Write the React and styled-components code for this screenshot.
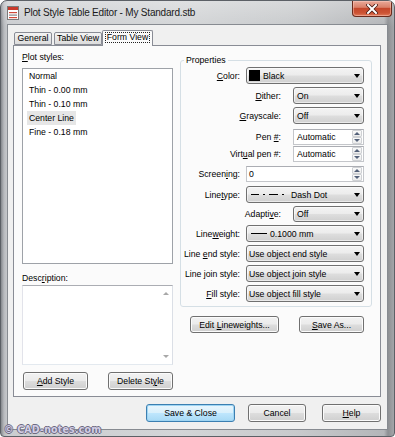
import React from "react";
import styled, { createGlobalStyle } from "styled-components";

const GlobalStyle = createGlobalStyle`
  *, *::before, *::after { box-sizing: border-box; }
  html, body { margin: 0; padding: 0; background: #fff; }
  body { font-family: "Liberation Sans", Arial, sans-serif; }
`;

const Window = styled.div`
  position: relative;
  width: 395px;
  height: 437px;
  border: 1px solid #5c6066;
  border-radius: 7px 7px 4px 4px;
  overflow: hidden;
  display: flex;
  flex-direction: column;
  background:
    linear-gradient(to bottom, rgba(255,255,255,0.28), rgba(255,255,255,0) 26px),
    linear-gradient(to right, #85888d 0px, #b8babe 3px, #cbcdd0 7px, #d3d5d7 45%, #c8cacc 75%, #b4b6b9 calc(100% - 10px), #8d8f93 calc(100% - 6px), #a4a6a9 100%);
  font-family: "Liberation Sans", Arial, sans-serif;
  font-size: 8.7px;
  color: #000;
`;

const TitleBar = styled.div`
  height: 23px;
  flex: none;
  display: flex;
  align-items: center;
  padding-left: 6px;
`;

const TitleText = styled.div`
  font-size: 10px;
  letter-spacing: -0.2px;
  color: #1a1a1a;
  margin-left: 5px;
  white-space: nowrap;
`;

const CloseButton = styled.div`
  margin-left: auto;
  margin-right: 2px;
  align-self: flex-start;
  width: 40px;
  height: 16px;
  border: 1px solid #6a2a1c;
  border-top: none;
  border-radius: 0 0 4px 4px;
  background: linear-gradient(#eaa999 0%, #d98069 42%, #c5472b 50%, #cc5334 80%, #e07a5a 100%);
  box-shadow: inset 0 0 0 1px rgba(255, 210, 200, 0.45);
  display: flex;
  align-items: center;
  justify-content: center;
`;

const Client = styled.div`
  flex: 1;
  margin: 0 6px 6px 6px;
  border: 1px solid #878b91;
  background: #f0f0f0;
  display: flex;
  flex-direction: column;
  padding: 5px 6px 0 5px;
`;

const TabStrip = styled.div`
  height: 15px;
  flex: none;
  display: flex;
  align-items: flex-end;
  padding-left: 1px;
`;

const Tab = styled.div`
  position: relative;
  z-index: ${(p) => (p.$active ? 2 : 1)};
  width: ${(p) => p.$w}px;
  margin-left: ${(p) => p.$ml || 0}px;
  height: ${(p) => (p.$active ? 16 : 13)}px;
  margin-bottom: ${(p) => (p.$active ? -1 : 0)}px;
  border: 1px solid #898c95;
  border-bottom: ${(p) => (p.$active ? "none" : "1px solid #898c95")};
  border-radius: 2px 2px 0 0;
  background: ${(p) =>
    p.$active ? "#fbfbfb" : "linear-gradient(#f4f4f4, #e6e6e6 50%, #dcdcdc)"};
  display: flex;
  align-items: ${(p) => (p.$active ? "flex-start" : "center")};
  justify-content: center;
  padding-top: ${(p) => (p.$active ? 1 : 0)}px;
  white-space: nowrap;
  line-height: 11px;
`;

const FocusRect = styled.span`
  border: 1px dotted #222;
  padding: 0 1px;
  line-height: 9px;
`;

const Panel = styled.div`
  height: 352px;
  flex: none;
  border: 1px solid #898c95;
  background: #fbfbfb;
  display: flex;
  gap: 7px;
  padding: 5px 8px 0 8px;
`;

const LeftCol = styled.div`
  width: 151px;
  flex: none;
  display: flex;
  flex-direction: column;
`;

const FieldLabel = styled.div`
  line-height: 12px;
  height: 12px;
  margin-top: ${(p) => p.$mt || 0}px;
  white-space: nowrap;
`;

const Key = styled.span`
  text-decoration: underline;
  text-underline-offset: 1px;
`;

const ListBox = styled.ul`
  list-style: none;
  margin: 5px 0 0 0;
  padding: 0;
  height: 196px;
  background: #fff;
  border: 1px solid #9ea2a8;
`;

const ListItem = styled.li`
  height: 14px;
  line-height: 14px;
  padding-left: 4px;
`;

const ItemText = styled.span`
  display: inline-block;
  padding: 0 2px;
  background: ${(p) => (p.$selected ? "#e6e6e6" : "transparent")};
`;

const TextArea = styled.div`
  margin-top: 1px;
  height: 80px;
  background: #fff;
  border: 1px solid #abadb3;
  border-color: #abadb3 #dbdfe6 #e3e9ef #e2e3ea;
  display: flex;
  justify-content: flex-end;
`;

const ScrollTrack = styled.div`
  width: 13px;
  display: flex;
  flex-direction: column;
  justify-content: space-between;
  align-items: center;
  padding: 6px 0 6px;
`;

const TinyArrow = styled.span`
  width: 0;
  height: 0;
  border-left: 3px solid transparent;
  border-right: 3px solid transparent;
  ${(p) =>
    p.$up
      ? `border-bottom: 3px solid ${p.$color || "#a8a8a8"};`
      : `border-top: 3px solid ${p.$color || "#a8a8a8"};`}
`;

const ButtonRow = styled.div`
  display: flex;
  justify-content: ${(p) => p.$justify || "space-between"};
  margin-top: ${(p) => p.$mt || 0}px;
  padding: ${(p) => p.$pad || "0"};
  flex: none;
`;

const Button = styled.div`
  width: ${(p) => p.$w}px;
  height: ${(p) => p.$h || 18}px;
  margin-left: ${(p) => p.$ml || 0}px;
  border: 1px solid ${(p) => (p.$default ? "#3c7fb1" : "#707070")};
  border-radius: 3px;
  background: ${(p) =>
    p.$default
      ? "linear-gradient(#eaf6fd 0%, #d9f0fc 48%, #bee6fd 52%, #a7d9f5 100%)"
      : "linear-gradient(#f2f2f2 0%, #ebebeb 48%, #dddddd 52%, #cfcfcf 100%)"};
  box-shadow: inset 0 0 0 1px ${(p) => (p.$default ? "#9fd5f3" : "#fbfbfb")};
  display: flex;
  align-items: center;
  justify-content: center;
  white-space: nowrap;
  color: #000;
`;

const Caption = styled.span`
  white-space: pre;
`;

const RightCol = styled.div`
  width: 192px;
  flex: none;
  display: flex;
  flex-direction: column;
  padding-top: 4px;
`;

const GroupBox = styled.fieldset`
  margin: 0;
  width: 192px;
  min-width: 0;
  border: 1px solid #d5dfe5;
  border-radius: 3px;
  padding: 0 7px 4px 0;
`;

const Legend = styled.legend`
  margin-left: 3px;
  padding: 0 2px;
  line-height: 11px;
  height: 11px;
`;

const Row = styled.div`
  display: flex;
  align-items: center;
  height: ${(p) => p.$h || 17}px;
  margin-top: ${(p) => (p.$mt === undefined ? 3 : p.$mt)}px;
`;

const RowLabel = styled.div`
  width: ${(p) => (p.$indent ? 100 : 59)}px;
  flex: none;
  text-align: right;
  white-space: nowrap;
`;

const Combo = styled.div`
  height: 100%;
  width: ${(p) => (p.$indent ? 71 : 118)}px;
  margin-left: ${(p) => (p.$indent ? 12 : 6)}px;
  border: 1px solid #707070;
  border-radius: 3px;
  background: linear-gradient(#f3f3f3 0%, #ececec 48%, #dedede 52%, #d0d0d0 100%);
  box-shadow: inset 0 0 0 1px rgba(255, 255, 255, 0.55);
  display: flex;
  align-items: center;
  padding: 0 3px 0 ${(p) => (p.$indent ? 3 : 2)}px;
  white-space: nowrap;
  overflow: hidden;
`;

const DropArrow = styled.span`
  margin-left: auto;
  flex: none;
  width: 0;
  height: 0;
  border-left: 3.5px solid transparent;
  border-right: 3.5px solid transparent;
  border-top: 4px solid #000;
`;

const Swatch = styled.span`
  width: 11px;
  height: 11px;
  background: #000;
  margin-right: 3px;
  flex: none;
`;

const SpinBox = styled.div`
  height: 100%;
  width: ${(p) => (p.$indent ? 71 : 118)}px;
  margin-left: ${(p) => (p.$indent ? 12 : 6)}px;
  background: #fff;
  border: 1px solid #c4c6ca;
  border-top-color: #abadb3;
  display: flex;
  align-items: center;
  padding-left: ${(p) => (p.$indent ? 3 : 2)}px;
  padding-right: 1px;
`;

const SpinButtons = styled.div`
  margin-left: auto;
  width: 10px;
  height: 14px;
  display: flex;
  flex-direction: column;
`;

const SpinHalf = styled.div`
  flex: 1;
  border: 1px solid #cfd1d4;
  border-radius: 1px;
  background: linear-gradient(#fafafa, #ececec);
  display: flex;
  align-items: center;
  justify-content: center;
`;

const LineSample = styled.svg`
  flex: none;
  margin-right: ${(p) => p.$mr || 4}px;
  margin-left: 1px;
`;

const Watermark = styled.div`
  position: absolute;
  left: 3px;
  bottom: 1px;
  font-family: "DejaVu Sans Condensed", "DejaVu Sans", sans-serif;
  font-weight: bold;
  font-size: 10.5px;
  letter-spacing: 0.2px;
  color: #d2cee6;
  text-shadow: 1px 0 0 #6d6a80, -1px 0 0 #6d6a80, 0 1px 0 #6d6a80, 0 -1px 0 #6d6a80;
  white-space: nowrap;
`;

const TitleIcon = () => (
  <svg width="12" height="14" viewBox="0 0 12 14">
    <rect x="0.5" y="0.5" width="11" height="13" fill="#fff" stroke="#7a7a7a" />
    <rect x="1" y="1" width="10" height="3" fill="#c9392a" />
    <rect x="2" y="6" width="8" height="1.2" fill="#d04a3a" />
    <rect x="2" y="8.5" width="8" height="1.2" fill="#888" />
    <rect x="2" y="11" width="8" height="1.2" fill="#d04a3a" />
  </svg>
);

const CloseGlyph = () => (
  <svg width="12" height="10" viewBox="0 0 12 10">
    <path d="M2 1 L10 9 M10 1 L2 9" stroke="#4a1a12" strokeWidth="3.6" strokeLinecap="square" />
    <path d="M2 1 L10 9 M10 1 L2 9" stroke="#fff" strokeWidth="2" strokeLinecap="square" />
  </svg>
);

const Spinner = () => (
  <SpinButtons>
    <SpinHalf>
      <TinyArrow $up $color="#55627a" />
    </SpinHalf>
    <SpinHalf>
      <TinyArrow $color="#55627a" />
    </SpinHalf>
  </SpinButtons>
);

const plotStyles = [
  "Normal",
  "Thin - 0.00 mm",
  "Thin - 0.10 mm",
  "Center Line",
  "Fine - 0.18 mm",
];

export default function App() {
  return (
    <>
      <GlobalStyle />
      <Window>
        <TitleBar>
          <TitleIcon />
          <TitleText>Plot Style Table Editor - My Standard.stb</TitleText>
          <CloseButton>
            <CloseGlyph />
          </CloseButton>
        </TitleBar>
        <Client>
          <TabStrip>
            <Tab $w={38}>General</Tab>
            <Tab $w={48} $ml={2}>Table View</Tab>
            <Tab $w={51} $ml={0} $active>
              <FocusRect>Form View</FocusRect>
            </Tab>
          </TabStrip>
          <Panel>
            <LeftCol>
              <FieldLabel>
                <Key>P</Key>lot styles:
              </FieldLabel>
              <ListBox>
                {plotStyles.map((s) => (
                  <ListItem key={s}>
                    <ItemText $selected={s === "Center Line"}>{s}</ItemText>
                  </ListItem>
                ))}
              </ListBox>
              <FieldLabel $mt={8}>
                Desc<Key>r</Key>iption:
              </FieldLabel>
              <TextArea>
                <ScrollTrack>
                  <TinyArrow $up />
                  <TinyArrow />
                </ScrollTrack>
              </TextArea>
              <ButtonRow $mt={7} $pad="0 0 0 1px">
                <Button $w={65}>
                  <Caption>
                    <Key>A</Key>dd Style
                  </Caption>
                </Button>
                <Button $w={65}>
                  <Caption>
                    Delete St<Key>y</Key>le
                  </Caption>
                </Button>
              </ButtonRow>
            </LeftCol>
            <RightCol>
              <GroupBox>
                <Legend>Properties</Legend>
                <Row $mt={1}>
                  <RowLabel>
                    <Key>C</Key>olor:
                  </RowLabel>
                  <Combo>
                    <Swatch />
                    Black
                    <DropArrow />
                  </Combo>
                </Row>
                <Row>
                  <RowLabel $indent>
                    <Key>D</Key>ither:
                  </RowLabel>
                  <Combo $indent>
                    On
                    <DropArrow />
                  </Combo>
                </Row>
                <Row>
                  <RowLabel $indent>
                    <Key>G</Key>rayscale:
                  </RowLabel>
                  <Combo $indent>
                    Off
                    <DropArrow />
                  </Combo>
                </Row>
                <Row $mt={5} $h={16}>
                  <RowLabel $indent>
                    Pen <Key>#</Key>:
                  </RowLabel>
                  <SpinBox $indent>
                    Automatic
                    <Spinner />
                  </SpinBox>
                </Row>
                <Row $mt={1} $h={16}>
                  <RowLabel $indent>
                    Virt<Key>u</Key>al pen #:
                  </RowLabel>
                  <SpinBox $indent>
                    Automatic
                    <Spinner />
                  </SpinBox>
                </Row>
                <Row $mt={4} $h={16}>
                  <RowLabel>
                    Screen<Key>i</Key>ng:
                  </RowLabel>
                  <SpinBox>
                    0
                    <Spinner />
                  </SpinBox>
                </Row>
                <Row $mt={4}>
                  <RowLabel>
                    Line<Key>t</Key>ype:
                  </RowLabel>
                  <Combo>
                    <LineSample width="36" height="3" viewBox="0 0 36 3" $mr={5}>
                      <path d="M1 1.5 H9 M13 1.5 H15 M19 1.5 H28 M32 1.5 H34" stroke="#000" strokeWidth="1" />
                    </LineSample>
                    Dash Dot
                    <DropArrow />
                  </Combo>
                </Row>
                <Row $h={16}>
                  <RowLabel $indent>
                    Adapti<Key>v</Key>e:
                  </RowLabel>
                  <Combo $indent>
                    Off
                    <DropArrow />
                  </Combo>
                </Row>
                <Row>
                  <RowLabel>
                    Line<Key>w</Key>eight:
                  </RowLabel>
                  <Combo>
                    <LineSample width="17" height="3" viewBox="0 0 17 3" $mr={3}>
                      <path d="M1 1.5 H17" stroke="#000" strokeWidth="1" />
                    </LineSample>
                    0.1000 mm
                    <DropArrow />
                  </Combo>
                </Row>
                <Row>
                  <RowLabel>
                    Line <Key>e</Key>nd style:
                  </RowLabel>
                  <Combo>
                    Use object end style
                    <DropArrow />
                  </Combo>
                </Row>
                <Row>
                  <RowLabel>
                    Line <Key>j</Key>oin style:
                  </RowLabel>
                  <Combo>
                    Use object join style
                    <DropArrow />
                  </Combo>
                </Row>
                <Row $mt={3}>
                  <RowLabel>
                    <Key>F</Key>ill style:
                  </RowLabel>
                  <Combo>
                    Use object fill style
                    <DropArrow />
                  </Combo>
                </Row>
              </GroupBox>
              <ButtonRow $mt={9} $pad="0 8px 0 10px">
                <Button $w={89} $h={17}>
                  <Caption>
                    Edit <Key>L</Key>ineweights...
                  </Caption>
                </Button>
                <Button $w={65} $h={17}>
                  <Caption>
                    <Key>S</Key>ave As...
                  </Caption>
                </Button>
              </ButtonRow>
            </RightCol>
          </Panel>
          <ButtonRow $mt={7} $justify="flex-end" $pad="0 -1px 0 0">
            <Button $w={89} $default>
              <Caption>Save &amp; Close</Caption>
            </Button>
            <Button $w={58} $ml={13}>
              <Caption>Cancel</Caption>
            </Button>
            <Button $w={59} $ml={16}>
              <Caption>
                <Key>H</Key>elp
              </Caption>
            </Button>
          </ButtonRow>
        </Client>
        <Watermark>© CAD-notes.com</Watermark>
      </Window>
    </>
  );
}
